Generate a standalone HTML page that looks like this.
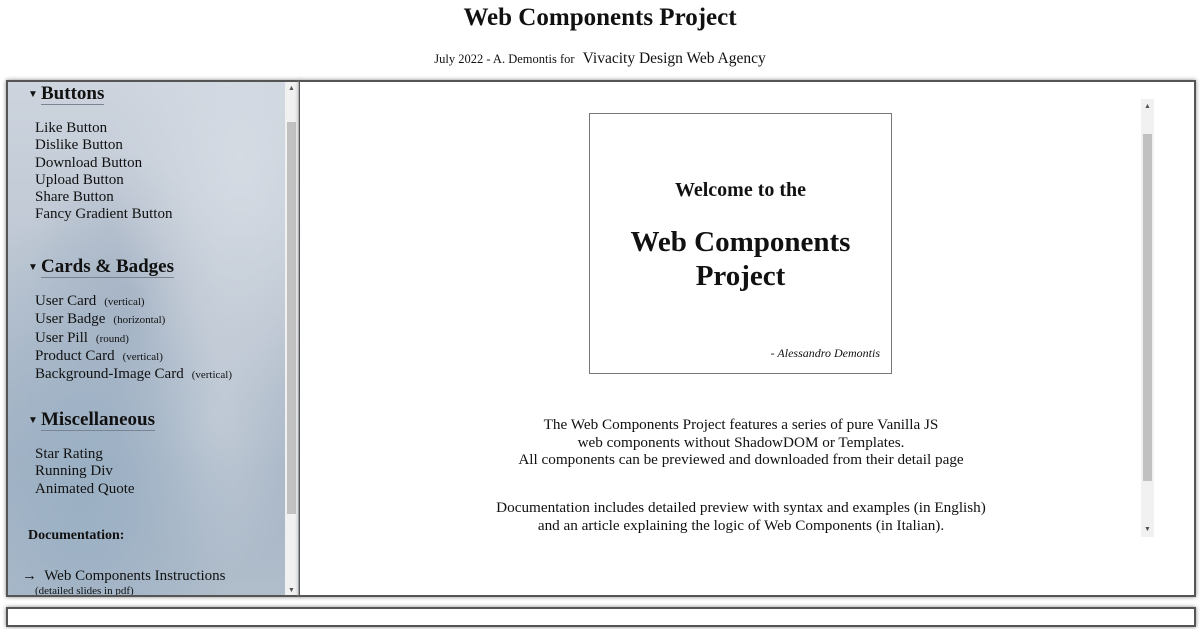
<!DOCTYPE html>
<html><head><meta charset="utf-8"><style>
*{margin:0;padding:0;box-sizing:border-box}
body{width:1200px;height:629px;background:#fff;font-family:"Liberation Serif",serif;color:#111;position:relative;overflow:hidden}
.a{position:absolute;white-space:nowrap}
h1{position:absolute;left:0;width:1200px;top:4px;text-align:center;font-size:25px;font-weight:bold}
.sub{left:0;width:1200px;top:50px;text-align:center;font-size:12.5px}
.sub span{font-size:15.5px;margin-left:5px}
#side{position:absolute;left:6px;top:80px;width:294px;height:517px;border:2px solid #555;border-right:1px solid #555;box-shadow:0 0 4px #888;
background:radial-gradient(ellipse at 80% 15%,#d5dbe3 0,transparent 40%),radial-gradient(ellipse at 25% 80%,#9bb0c4 0,transparent 50%),radial-gradient(ellipse at 70% 65%,#c3ccd7 0,transparent 35%),radial-gradient(ellipse at 40% 45%,#aab6c6 0,transparent 40%),linear-gradient(180deg,#cdd4de 0%,#b9c3d0 45%,#a5b4c5 75%,#b0bdcb 100%);overflow:hidden}
#main{position:absolute;left:299px;top:80px;width:897px;height:517px;border:2px solid #555;border-left:1px solid #555;box-shadow:0 0 4px #888;background:#fff}
.h{font-size:19px;font-weight:bold;border-bottom:1px solid #7a8594;line-height:21px}
.tri{font-size:10px;position:absolute}
.i{font-size:15px;line-height:17.3px}
.s{font-size:11px;margin-left:8px}
.sb{position:absolute;background:#f1f1f1}
.th{position:absolute;background:#c1c1c1}
.c{text-align:center;width:882px;left:0;font-size:15.2px;line-height:17.5px}
</style></head><body>
<h1>Web Components Project</h1>
<div class="a sub">July 2022 - A. Demontis for <span>Vivacity Design Web Agency</span></div>
<div id="side">
 <div class="tri" style="left:20px;top:7px">▼</div><div class="a h" style="left:33px;top:1px">Buttons</div>
 <div class="a i" style="left:27px;top:38px">Like Button<br>Dislike Button<br>Download Button<br>Upload Button<br>Share Button<br>Fancy Gradient Button</div>
 <div class="tri" style="left:20px;top:180px">▼</div><div class="a h" style="left:33px;top:174px">Cards &amp; Badges</div>
 <div class="a i" style="left:27px;top:211px">User Card<span class="s">(vertical)</span><br>User Badge<span class="s">(horizontal)</span><br>User Pill<span class="s">(round)</span><br>Product Card<span class="s">(vertical)</span><br>Background-Image Card<span class="s">(vertical)</span></div>
 <div class="tri" style="left:20px;top:333px">▼</div><div class="a h" style="left:33px;top:327px">Miscellaneous</div>
 <div class="a i" style="left:27px;top:364px">Star Rating<br>Running Div<br>Animated Quote</div>
 <div class="a" style="left:20px;top:446px;font-size:14px;font-weight:bold">Documentation:</div>
 <div class="a" style="left:14px;top:486px;font-size:15px">→&nbsp; Web Components Instructions</div>
 <div class="a" style="left:27px;top:503px;font-size:11px">(detailed slides in pdf)</div>
 <div class="sb" style="left:277px;top:0;width:13px;height:515px"></div>
 <div class="th" style="left:279px;top:40px;width:9px;height:392px"></div>
 <div class="a" style="left:280px;top:2px;font-size:7px;color:#555">▲</div>
 <div class="a" style="left:280px;top:504px;font-size:7px;color:#555">▼</div>
</div>
<div id="main">
 <div style="position:absolute;left:289px;top:31px;width:303px;height:261px;border:1px solid #777">
  <div class="a" style="left:0;width:301px;top:65px;text-align:center;font-size:20px;font-weight:bold">Welcome to the</div>
  <div class="a" style="left:0;width:301px;top:111px;text-align:center;font-size:29px;font-weight:bold;line-height:34px">Web Components<br>Project</div>
  <div class="a" style="right:11px;top:232px;font-size:12px;font-style:italic">- Alessandro Demontis</div>
 </div>
 <div class="a c" style="top:334px">The Web Components Project features a series of pure Vanilla JS<br>web components without ShadowDOM or Templates.<br>All components can be previewed and downloaded from their detail page</div>
 <div class="a c" style="top:417px">Documentation includes detailed preview with syntax and examples (in English)<br>and an article explaining the logic of Web Components (in Italian).</div>
 <div class="sb" style="left:841px;top:17px;width:13px;height:438px"></div>
 <div class="th" style="left:843px;top:52px;width:9px;height:347px"></div>
 <div class="a" style="left:844px;top:20px;font-size:7px;color:#555">▲</div>
 <div class="a" style="left:844px;top:443px;font-size:7px;color:#555">▼</div>
</div>
<div style="position:absolute;left:6px;top:607px;width:1190px;height:20px;border:2px solid #555;box-shadow:0 0 4px #888;background:#fff"></div>
</body></html>
